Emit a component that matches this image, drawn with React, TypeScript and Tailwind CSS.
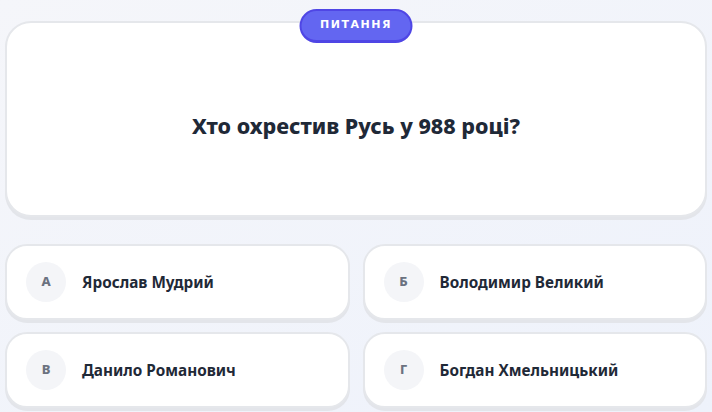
import React from "react";

const answers = [
  { key: "А", text: "Ярослав Мудрий" },
  { key: "Б", text: "Володимир Великий" },
  { key: "В", text: "Данило Романович" },
  { key: "Г", text: "Богдан Хмельницький" },
];

export default function App() {
  return (
    <div
      className="w-[712px] h-[412px] overflow-hidden bg-gradient-to-br from-[#f5f6fa] to-[#eef2fb] px-[5px]"
      style={{ fontFamily: "'Noto Sans', 'Open Sans', sans-serif" }}
    >
      <div className="relative mt-[21px] h-[196px] rounded-[26px] border-2 border-[#e5e7eb] bg-white shadow-[0_3px_0_#e3e5ea] flex items-center justify-center">
        <div className="absolute left-1/2 -translate-x-1/2 -top-[14px] h-[34px] w-[113px] rounded-full bg-[#6366f1] border-2 border-[#4f46e5] border-b-[3px] flex items-center justify-center">
          <span
            className="text-white text-[11px] font-extrabold tracking-[1.5px]"
            style={{ fontFamily: "'DejaVu Sans', sans-serif" }}
          >
            ПИТАННЯ
          </span>
        </div>
        <h1 className="mt-[14px] text-[21.5px] font-extrabold text-[#1f2937]">
          Хто охрестив Русь у 988 році?
        </h1>
      </div>

      <div className="mt-[27px] grid grid-cols-2 gap-x-[13px] gap-y-[12px]">
        {answers.map((a) => (
          <div
            key={a.key}
            className="h-[76px] rounded-[22px] border-2 border-[#e5e7eb] bg-white shadow-[0_3px_0_#e3e5ea] flex items-center pl-[19px]"
          >
            <div className="w-[40px] h-[40px] rounded-full bg-[#f4f5f8] flex items-center justify-center text-[13px] font-extrabold text-[#6b7280]">
              {a.key}
            </div>
            <span className="ml-[16px] text-[15.3px] font-bold text-[#1f2937]">
              {a.text}
            </span>
          </div>
        ))}
      </div>
    </div>
  );
}
